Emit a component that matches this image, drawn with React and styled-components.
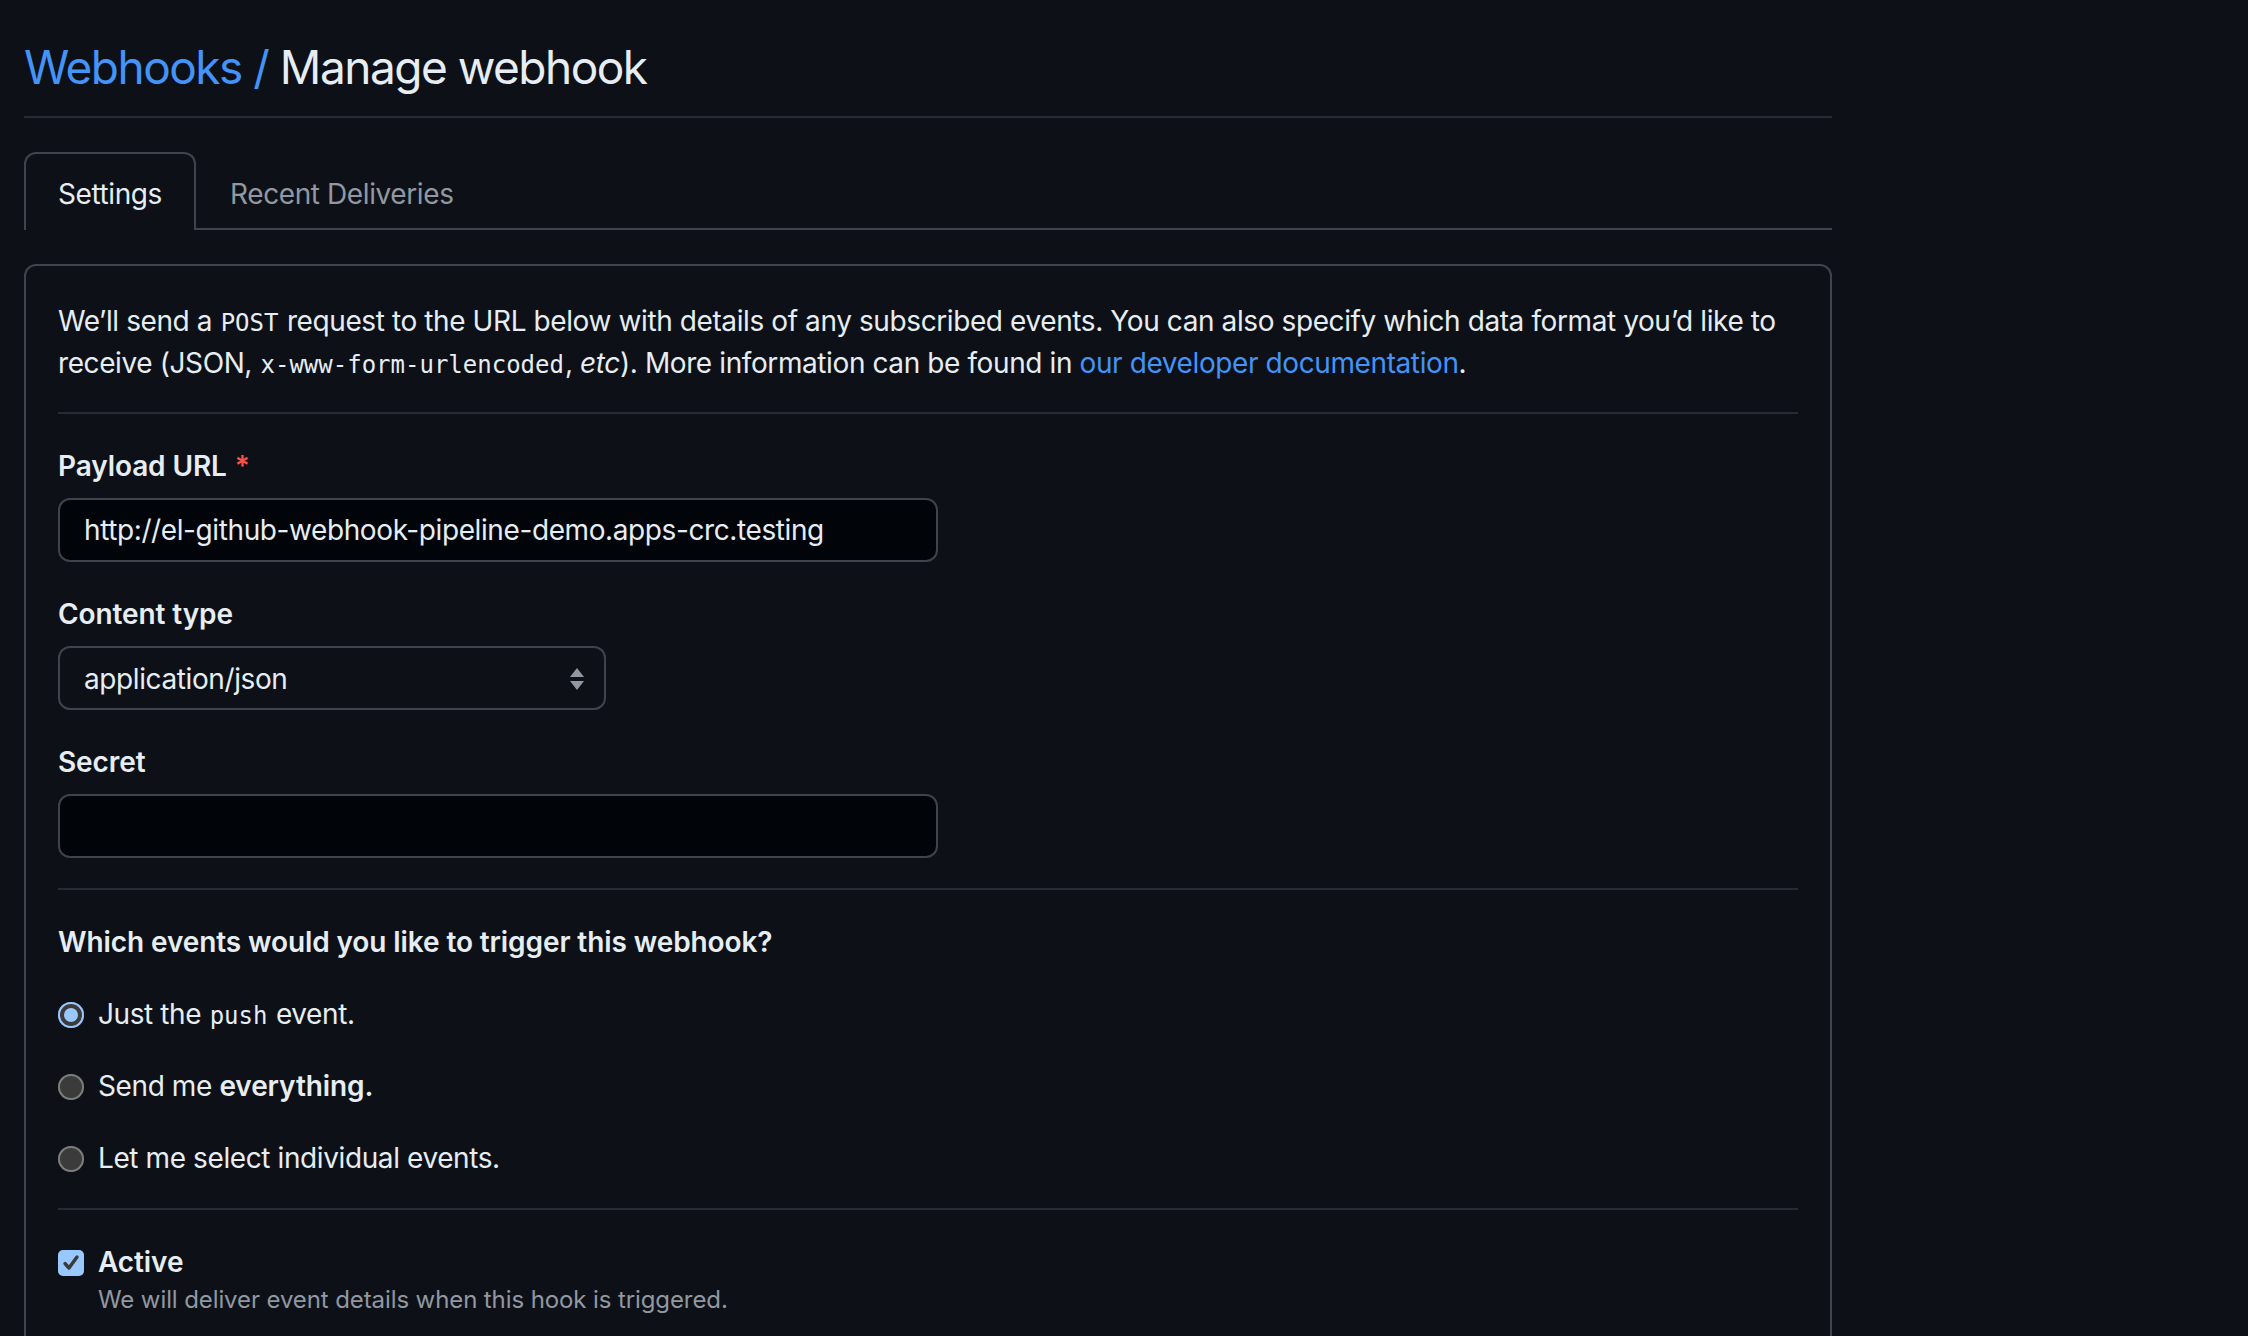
import React from 'react';
import styled, { createGlobalStyle } from 'styled-components';

const GlobalStyle = createGlobalStyle`
  html, body {
    margin: 0;
    background: #0d1117;
  }
  body {
    font-family: Inter, "Liberation Sans", "Noto Sans", sans-serif;
    color: #e6edf3;
    font-size: 28px;
    letter-spacing: -0.4px;
  }
  * { box-sizing: border-box; }
`;

const Page = styled.div`
  width: 1832px;
  padding: 31px 0 0 24px;
`;

const Subhead = styled.h1`
  margin: 0;
  font-size: 46px;
  font-weight: 400;
  letter-spacing: -1.5px;
  line-height: 72px;
  padding-bottom: 13px;
  border-bottom: 2px solid #262c34;
`;

const Crumb = styled.a`
  color: #4493f8;
  text-decoration: none;
`;

const TabNav = styled.nav`
  display: flex;
  margin-top: 34px;
  border-bottom: 2px solid #3d444d;
`;

const Tab = styled.a`
  padding: 19px 32px 15px;
  line-height: 42px;
  font-size: 28px;
  border: 2px solid transparent;
  border-bottom: 0;
  border-radius: 12px 12px 0 0;
  margin-bottom: -2px;
  background: ${(p) => (p.$selected ? '#0d1117' : 'transparent')};
  border-color: ${(p) => (p.$selected ? '#3d444d' : 'transparent')};
  color: ${(p) => (p.$selected ? '#e6edf3' : '#9198a1')};
  cursor: pointer;
`;

const Box = styled.div`
  margin-top: 34px;
  border: 2px solid #3d444d;
  border-radius: 12px;
  padding: 32px 32px 120px;
`;

const Intro = styled.p`
  margin: 0 0 28px;
  padding-top: 2px;
  line-height: 42px;
`;

const Code = styled.code`
  font-family: "DejaVu Sans Mono", "Liberation Mono", monospace;
  font-size: 24px;
  line-height: 1;
  letter-spacing: 0;
  padding: 0 1px;
`;

const Link = styled.a`
  color: #4493f8;
  text-decoration: none;
`;

const Divider = styled.div`
  height: 2px;
  background: #262c34;
  margin-top: ${(p) => p.$top || 0}px;
`;

const FormGroup = styled.div`
  margin-top: 30px;
`;

const Label = styled.label`
  display: block;
  padding-top: 2px;
  font-weight: 600;
  letter-spacing: -0.1px;
  line-height: 40px;
  margin-bottom: 12px;
`;

const Required = styled.span`
  color: #f85149;
  margin-left: 8px;
`;

const TextInput = styled.input`
  display: block;
  width: 880px;
  height: 64px;
  padding: 0 24px;
  border: 2px solid #3d444d;
  border-radius: 12px;
  background: #010409;
  color: #e6edf3;
  font-family: inherit;
  font-size: 28px;
  letter-spacing: -0.4px;
  outline: none;
`;

const Select = styled.div`
  display: flex;
  align-items: center;
  justify-content: space-between;
  width: 548px;
  height: 64px;
  padding: 2px 18px 0 24px;
  border: 2px solid #3d444d;
  border-radius: 12px;
  background: #0d1117;
  line-height: 42px;
`;

const Question = styled.h3`
  margin: 30px 0 0;
  padding-top: 2px;
  font-size: 28px;
  font-weight: 600;
  letter-spacing: -0.1px;
  line-height: 40px;
`;

const CheckRow = styled.label`
  display: flex;
  align-items: center;
  gap: 14px;
  margin-top: 30px;
  padding-top: 3px;
  height: 42px;
  line-height: 39px;
  font-weight: ${(p) => (p.$bold ? 600 : 400)};
  letter-spacing: ${(p) => (p.$bold ? '-0.1px' : '-0.4px')};

  strong {
    font-weight: 600;
    letter-spacing: -0.1px;
  }
`;

const Radio = styled.input.attrs({ type: 'radio' })`
  appearance: none;
  margin: 0;
  width: 26px;
  height: 26px;
  flex: none;
  border-radius: 50%;
  background: #3b3b3b;
  box-shadow: inset 0 0 0 2px #7d7d7d;

  &:checked {
    background: #99c8ff;
    box-shadow: inset 0 0 0 2px #99c8ff, inset 0 0 0 6px #3b3b3b;
  }
`;

const Checkbox = styled.span`
  display: flex;
  align-items: center;
  justify-content: center;
  width: 26px;
  height: 26px;
  flex: none;
  border-radius: 5px;
  background: #99c8ff;
`;

const Note = styled.p`
  margin: 0;
  padding-left: 40px;
  font-size: 24px;
  letter-spacing: -0.1px;
  line-height: 36px;
  color: #9198a1;
`;

const SelectArrows = () => (
  <svg width="18" height="26" viewBox="0 0 18 26">
    <path d="M9 2 L16 11 L2 11 Z" fill="#9198a1" />
    <path d="M9 24 L16 15 L2 15 Z" fill="#9198a1" />
  </svg>
);

export default function App() {
  return (
    <Page>
      <GlobalStyle />
      <Subhead>
        <Crumb>Webhooks /</Crumb> Manage webhook
      </Subhead>

      <TabNav>
        <Tab $selected>Settings</Tab>
        <Tab>Recent Deliveries</Tab>
      </TabNav>

      <Box>
        <Intro>
          We’ll send a <Code>POST</Code> request to the URL below with details of any subscribed
          events. You can also specify which data format you’d like to receive (JSON,{' '}
          <Code>x-www-form-urlencoded</Code>, <em>etc</em>). More information can be found in{' '}
          <Link>our developer documentation</Link>.
        </Intro>
        <Divider />

        <FormGroup>
          <Label>
            Payload URL<Required>*</Required>
          </Label>
          <TextInput defaultValue="http://el-github-webhook-pipeline-demo.apps-crc.testing" />
        </FormGroup>

        <FormGroup>
          <Label>Content type</Label>
          <Select>
            <span>application/json</span>
            <SelectArrows />
          </Select>
        </FormGroup>

        <FormGroup>
          <Label>Secret</Label>
          <TextInput type="password" />
        </FormGroup>

        <Divider $top={30} />

        <Question>Which events would you like to trigger this webhook?</Question>
        <CheckRow>
          <Radio name="events" defaultChecked />
          <span>
            Just the <Code>push</Code> event.
          </span>
        </CheckRow>
        <CheckRow>
          <Radio name="events" />
          <span>
            Send me <strong>everything.</strong>
          </span>
        </CheckRow>
        <CheckRow>
          <Radio name="events" />
          <span>Let me select individual events.</span>
        </CheckRow>

        <Divider $top={30} />

        <CheckRow $bold>
          <Checkbox>
            <svg width="20" height="20" viewBox="0 0 20 20">
              <path d="M4 10.5 L8 15 L16 4" stroke="#3b3b3b" strokeWidth="3.4" fill="none" strokeLinecap="round" strokeLinejoin="round" />
            </svg>
          </Checkbox>
          Active
        </CheckRow>
        <Note>We will deliver event details when this hook is triggered.</Note>
      </Box>
    </Page>
  );
}
